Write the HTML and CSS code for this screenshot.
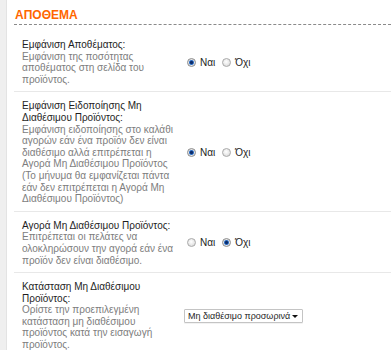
FILE: index.html
```html
<!DOCTYPE html>
<html lang="el">
<head>
<meta charset="utf-8">
<title>Απόθεμα</title>
<link rel="stylesheet" href="styles.css">
</head>
<body>
<div class="page">
  <div class="rail"></div>
  <div class="main">
    <h2 class="title">ΑΠΟΘΕΜΑ</h2>

    <div class="row first">
      <div class="label">
        <div class="name">Εμφάνιση Αποθέματος:</div>
        <div class="desc">Εμφάνιση της ποσότητας αποθέματος στη σελίδα του προϊόντος.</div>
      </div>
      <div class="value">
        <label class="opt"><input type="radio" name="r1" checked><span>Ναι</span></label>
        <label class="opt"><input type="radio" name="r1"><span>Όχι</span></label>
      </div>
    </div>

    <div class="row">
      <div class="label">
        <div class="name">Εμφάνιση Ειδοποίησης Μη Διαθέσιμου Προϊόντος:</div>
        <div class="desc">Εμφάνιση ειδοποίησης στο καλάθι αγορών εάν ένα προϊόν δεν είναι διαθέσιμο αλλά επιτρέπεται η Αγορά Μη Διαθέσιμου Προϊόντος (Το μήνυμα θα εμφανίζεται πάντα εάν δεν επιτρέπεται η Αγορά Μη Διαθέσιμου Προϊόντος)</div>
      </div>
      <div class="value">
        <label class="opt"><input type="radio" name="r2" checked><span>Ναι</span></label>
        <label class="opt"><input type="radio" name="r2"><span>Όχι</span></label>
      </div>
    </div>

    <div class="row">
      <div class="label">
        <div class="name">Αγορά Μη Διαθέσιμου Προϊόντος:</div>
        <div class="desc">Επιτρέπεται οι πελάτες να ολοκληρώσουν την αγορά εάν ένα προϊόν δεν είναι διαθέσιμο.</div>
      </div>
      <div class="value">
        <label class="opt"><input type="radio" name="r3"><span>Ναι</span></label>
        <label class="opt"><input type="radio" name="r3" checked><span>Όχι</span></label>
      </div>
    </div>

    <div class="row last">
      <div class="label">
        <div class="name">Κατάσταση Μη Διαθέσιμου Προϊόντος:</div>
        <div class="desc">Ορίστε την προεπιλεγμένη κατάσταση μη διαθέσιμου προϊόντος κατά την εισαγωγή προϊόντος.</div>
      </div>
      <div class="value">
        <span class="select-wrap">
          <select class="select">
            <option>Μη διαθέσιμο προσωρινά</option>
          </select>
        </span>
      </div>
    </div>
  </div>
</div>
</body>
</html>
```

FILE: styles.css
```css
html, body {
  margin: 0;
  padding: 0;
  background: #fff;
}

body {
  font-family: "Liberation Sans", Arial, sans-serif;
  font-size: 10px;
  color: #222;
}

.page {
  display: flex;
  min-height: 350px;
}

.rail {
  width: 6px;
  flex: none;
  background: #efefef;
  border-right: 1px solid #e3e3e3;
}

.main {
  flex: 1;
  padding: 8px 0 0 7px;
}

.title {
  margin: 0 0 6px;
  padding: 0 0 2px 1px;
  font-size: 12px;
  line-height: 14px;
  font-weight: bold;
  color: #ff6600;
  border-bottom: 1px dashed #8a8a8a;
}

.row {
  display: flex;
  align-items: center;
  padding: 8px 0 6px;
  border-top: 1px solid #e8e8e8;
}

.row.first {
  border-top: none;
}

.row.last {
  border-bottom: 1px solid #e8e8e8;
}

.label {
  width: 160px;
  flex: none;
  padding-left: 8px;
  padding-right: 2px;
  line-height: 11.6px;
}

.name {
  color: #1e1e1e;
}

.desc {
  color: #7d7d7d;
}

.value {
  display: flex;
  align-items: center;
  padding-left: 0;
}

.opt {
  display: inline-flex;
  align-items: center;
  margin-right: 4px;
  color: #222;
  font-size: 10px;
}

.opt input {
  -webkit-appearance: none;
  appearance: none;
  width: 9px;
  height: 9px;
  margin: 0 4px 0 3px;
  border: 1px solid #a9a9a9;
  border-radius: 50%;
  background: radial-gradient(circle at 45% 40%, #ffffff 0, #eeeeee 40%, #d2d2d2 100%);
  box-sizing: border-box;
}

.opt input:checked {
  border-color: #8d8d8d;
  background: radial-gradient(circle at center, #0b2c6a 0, #0b2c6a 1.2px, #2a6cc4 2px, #8fb3e0 2.6px, #e6e6e6 3px, #cfcfcf 100%);
}

.select-wrap {
  position: relative;
  display: inline-block;
}

.select {
  -webkit-appearance: none;
  appearance: none;
  width: 119px;
  height: 14px;
  margin: 0;
  padding: 0 0 0 3px;
  border: 1px solid #c4c4c4;
  border-radius: 1px;
  background: #fff;
  font-family: "Liberation Sans", Arial, sans-serif;
  font-size: 9px;
  line-height: 12px;
  color: #1e1e1e;
  box-shadow: 0 1px 0 rgba(0, 0, 0, 0.05);
}

.select-wrap::after {
  content: "";
  position: absolute;
  right: 5px;
  top: 6px;
  border-left: 3px solid transparent;
  border-right: 3px solid transparent;
  border-top: 3px solid #111;
  pointer-events: none;
}
```
